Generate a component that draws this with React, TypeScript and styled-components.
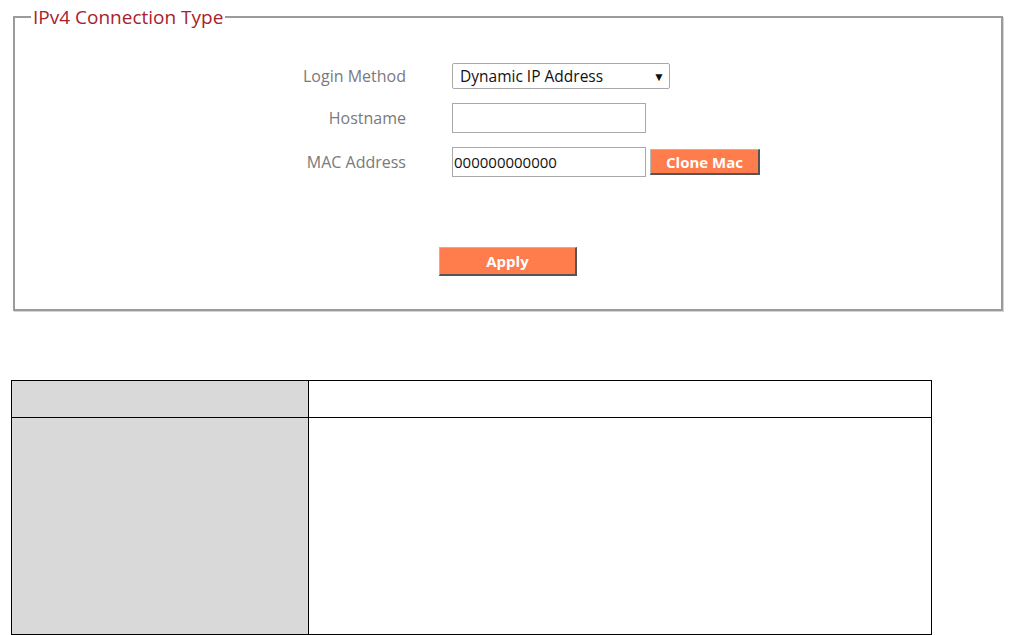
import styled, { createGlobalStyle } from 'styled-components'

const GlobalStyle = createGlobalStyle`
    html, body {
        margin: 0;
        padding: 0;
        background: #ffffff;
    }
    body {
        font-family: 'Open Sans', 'Liberation Sans', sans-serif;
    }
`

const Page = styled.div`
    width: 1022px;
    height: 635px;
    overflow: hidden;
    padding-top: 7px;
    box-sizing: border-box;
`

// connection settings panel
const Panel = styled.fieldset`
    margin: 0 19px 0 13px;
    padding: 36px 0 33px 0;
    border: 2px solid #9b9b9b;
    box-shadow: 1px 1px 0 #d4d4d4;
    min-width: 0;
`

const Legend = styled.legend`
    margin-left: 16px;
    padding: 0 2px;
    font-size: 19px;
    line-height: 20px;
    color: #a8222c;
`

const FormGrid = styled.div`
    display: grid;
    grid-template-columns: 391px 1fr;
    column-gap: 46px;
    row-gap: 14px;
    align-items: center;
`

const Label = styled.label`
    text-align: right;
    font-size: 16px;
    color: #7a7a7a;
`

const Controls = styled.div`
    display: flex;
    align-items: center;
    gap: 4px;
`

const Select = styled.div`
    width: 218px;
    height: 26px;
    box-sizing: border-box;
    border: 1px solid #a9a9a9;
    border-radius: 2px;
    display: flex;
    align-items: center;
    justify-content: space-between;
    padding: 0 4px 0 7px;
    font-size: 15.5px;
    color: #111;
`

const Arrow = styled.span`
    font-size: 12px;
    color: #111;
`

const TextInput = styled.input`
    width: 194px;
    height: 30px;
    box-sizing: border-box;
    border: 1px solid #a9a9a9;
    padding: 0 1px;
    font-family: 'Open Sans', 'Liberation Sans', sans-serif;
    font-size: 15px;
    color: #111;
    outline: none;
`

const OrangeButton = styled.button<{ $w: number; $h: number }>`
    width: ${({ $w }) => $w}px;
    height: ${({ $h }) => $h}px;
    box-sizing: border-box;
    background: #ff7c4c;
    color: #ffffff;
    font-family: 'Open Sans', 'Liberation Sans', sans-serif;
    font-weight: 700;
    font-size: 15px;
    border-style: solid;
    border-width: 1px 2px 2px 1px;
    border-color: #b8b8b8 #555555 #555555 #b8b8b8;
    padding: 0;
    cursor: pointer;
`

const ApplyRow = styled.div`
    display: flex;
    justify-content: center;
    margin-top: 70px;
`

// description table
const InfoTable = styled.table`
    margin: 69px 0 0 11px;
    width: 921px;
    border-collapse: collapse;

    td {
        border: 1.5px solid #000;
        padding: 0;
    }
`

const KeyCell = styled.td<{ $h: number }>`
    width: 296px;
    height: ${({ $h }) => $h}px;
    background: #d9d9d9;
`

const ValueCell = styled.td``

const App = () => {
    return (
        <Page>
            <GlobalStyle />
            <Panel>
                <Legend>IPv4 Connection Type</Legend>
                <FormGrid>
                    <Label>Login Method</Label>
                    <Controls>
                        <Select>
                            <span>Dynamic IP Address</span>
                            <Arrow>▼</Arrow>
                        </Select>
                    </Controls>

                    <Label>Hostname</Label>
                    <Controls>
                        <TextInput defaultValue="" />
                    </Controls>

                    <Label>MAC Address</Label>
                    <Controls>
                        <TextInput defaultValue="000000000000" />
                        <OrangeButton $w={110} $h={26}>Clone Mac</OrangeButton>
                    </Controls>
                </FormGrid>
                <ApplyRow>
                    <OrangeButton $w={138} $h={29}>Apply</OrangeButton>
                </ApplyRow>
            </Panel>

            <InfoTable>
                <tbody>
                    <tr>
                        <KeyCell $h={36} />
                        <ValueCell />
                    </tr>
                    <tr>
                        <KeyCell $h={216} />
                        <ValueCell />
                    </tr>
                </tbody>
            </InfoTable>
        </Page>
    )
}

export default App
